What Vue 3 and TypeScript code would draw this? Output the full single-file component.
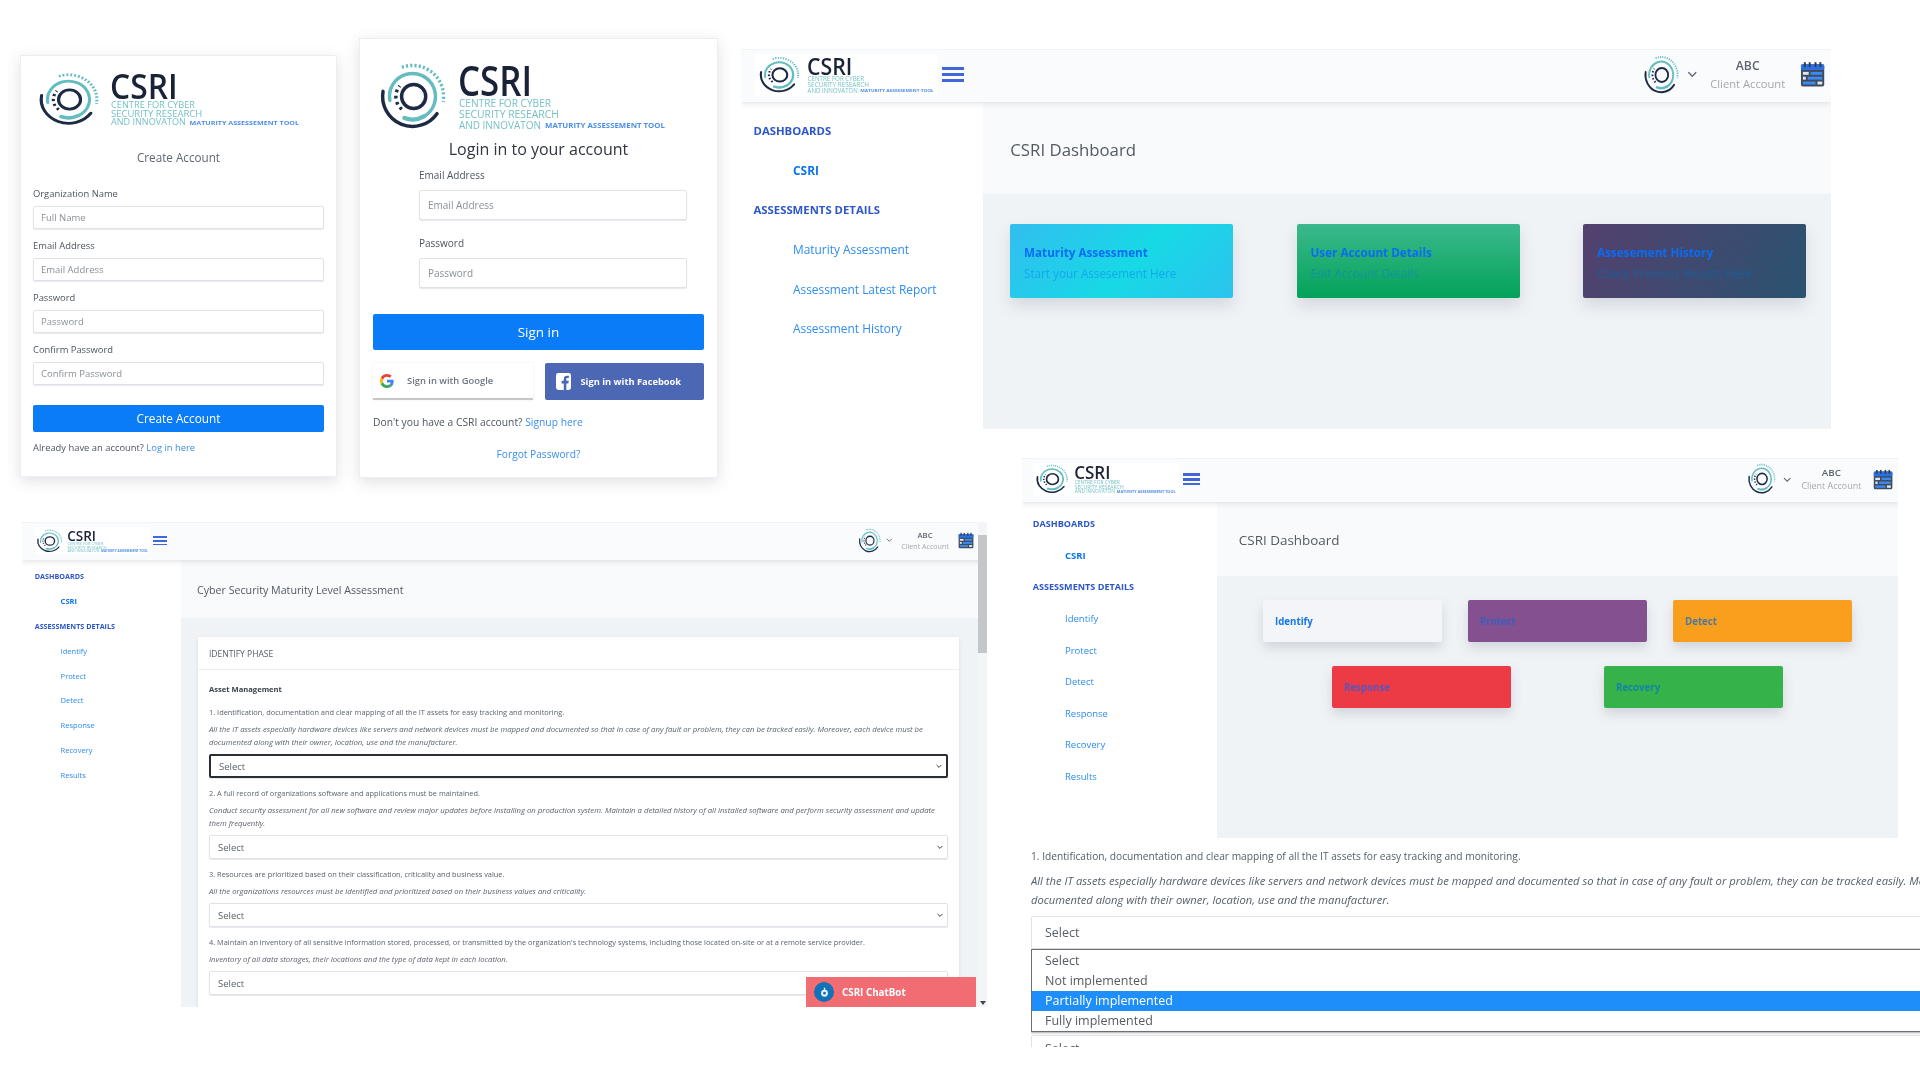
<script setup lang="ts">
import { defineComponent, h } from 'vue'

const arc = (d: string, stroke: string, width: number, dash?: string) =>
  h('path', { d, fill: 'none', stroke, 'stroke-width': width, 'stroke-dasharray': dash, 'stroke-linecap': dash ? 'butt' : 'round' })

const ringParts = () => [
  arc('M4.4 25.5A26 26 0 0 0 51.3 44.9', '#1d2a44', 3),
  arc('M10.3 33.5A20 20 0 1 1 40 47.3', '#63bcc0', 3),
  arc('M40 47.3A20 20 0 0 1 23 48.7', '#63bcc0', 3.8),
  arc('M20.8 4.6A27 27 0 0 1 56.6 34.7', '#63bcc0', 3, '1.8 1.9'),
  arc('M20.7 41.1A14.5 14.5 0 0 1 18.9 20.7', '#1d2a44', 3, '2.4 3'),
  h('circle', { cx: 31, cy: 30, r: 10.5, fill: 'none', stroke: '#1d2a44', 'stroke-width': 3 }),
]

const Mark = defineComponent({
  setup() {
    return () => h('svg', { viewBox: '0 0 60 60', preserveAspectRatio: 'none', width: '100%', height: '100%' }, ringParts())
  },
})

const tealLine = (y: number, text: string, len: number) =>
  h('text', { x: 81, y, 'font-size': 11.5, fill: '#76c1c6', textLength: len, lengthAdjust: 'spacingAndGlyphs', 'font-family': 'Open Sans, sans-serif' }, text)

const Logo = defineComponent({
  setup() {
    return () =>
      h('svg', { viewBox: '0 0 288 69', preserveAspectRatio: 'none', width: '100%', height: '100%', style: 'overflow:visible' }, [
        h('g', { transform: 'scale(1.15)' }, ringParts()),
        h('text', { x: 80, y: 34, 'font-size': 42, fill: '#1a2238', textLength: 74, lengthAdjust: 'spacingAndGlyphs', 'font-family': 'Open Sans, sans-serif', 'font-weight': 600 }, 'CSRI'),
        tealLine(45, 'CENTRE FOR CYBER', 92),
        tealLine(56, 'SECURITY RESEARCH', 100),
        tealLine(67, 'AND INNOVATON', 82),
        h('text', { x: 167, y: 66, 'font-size': 7.5, fill: '#4c8fe8', 'font-weight': 700, textLength: 120, lengthAdjust: 'spacingAndGlyphs', 'font-family': 'Open Sans, sans-serif' }, 'MATURITY ASSESSEMENT TOOL'),
      ])
  },
})

const createFields = [
  { label: 'Organization Name', ph: 'Full Name' },
  { label: 'Email Address', ph: 'Email Address' },
  { label: 'Password', ph: 'Password' },
  { label: 'Confirm Password', ph: 'Confirm Password' },
]
const loginFields = [
  { label: 'Email Address', ph: 'Email Address' },
  { label: 'Password', ph: 'Password' },
]
const phaseLinks = ['Identify', 'Protect', 'Detect', 'Response', 'Recovery', 'Results']
const shells = [
  { key: 'dash', title: 'CSRI Dashboard', links: ['Maturity Assessment', 'Assessment Latest Report', 'Assessment History'] },
  { key: 'assess', title: 'Cyber Security Maturity Level Assessment', links: phaseLinks },
  { key: 'phases', title: 'CSRI Dashboard', links: phaseLinks },
]
const dashCards = [
  { cls: 'c-teal', title: 'Maturity Assessment', sub: 'Start your Assesement Here' },
  { cls: 'c-green', title: 'User Account Details', sub: 'Edit Account Details' },
  { cls: 'c-purple', title: 'Assesement History', sub: 'Check Previous Results Here' },
]
const phaseRows = [
  [
    { cls: 'p-white', name: 'Identify' },
    { cls: 'p-purple', name: 'Protect' },
    { cls: 'p-orange', name: 'Detect' },
  ],
  [
    { cls: 'p-red', name: 'Response' },
    { cls: 'p-green', name: 'Recovery' },
  ],
]
const questions = [
  {
    q: '1. Identification, documentation and clear mapping of all the IT assets for easy tracking and monitoring.',
    d: ['All the IT assets especially hardware devices like servers and network devices must be mapped and documented so that in case of any fault or problem, they can be tracked easily. Moreover, each device must be', 'documented along with their owner, location, use and the manufacturer.'],
    focus: true,
  },
  {
    q: '2. A full record of organizations software and applications must be maintained.',
    d: ['Conduct security assessment for all new software and review major updates before installing on production system. Maintain a detailed history of all installed software and perform security assessment and update', 'them frequently.'],
    focus: false,
  },
  {
    q: '3. Resources are prioritized based on their classification, criticality and business value.',
    d: ['All the organizations resources must be identified and prioritized based on their business values and criticality.'],
    focus: false,
  },
  {
    q: "4. Maintain an inventory of all sensitive information stored, processed, or transmitted by the organization's technology systems, including those located on-site or at a remote service provider.",
    d: ['Inventory of all data storages, their locations and the type of data kept in each location.'],
    focus: false,
  },
]
const options = ['Select', 'Not implemented', 'Partially implemented', 'Fully implemented']
</script>

<template>
  <div class="canvas">
    <!-- Create account -->
    <section class="win create">
      <div class="logo-c"><Logo /></div>
      <h2 class="create-title">Create Account</h2>
      <div v-for="f in createFields" :key="f.label" class="c-field">
        <label>{{ f.label }}</label>
        <div class="input">{{ f.ph }}</div>
      </div>
      <div class="btn c-btn">Create Account</div>
      <p class="c-foot">Already have an account? <a>Log in here</a></p>
    </section>

    <!-- Login -->
    <section class="win login">
      <div class="logo-l"><Logo /></div>
      <h1 class="login-title">Login in to your account</h1>
      <div class="l-fields">
        <div v-for="f in loginFields" :key="f.label" class="l-field">
          <label>{{ f.label }}</label>
          <div class="input">{{ f.ph }}</div>
        </div>
      </div>
      <div class="btn l-btn">Sign in</div>
      <div class="social">
        <div class="s-google">
          <svg viewBox="0 0 48 48" width="14" height="14">
            <path fill="#EA4335" d="M24 9.5c3.5 0 6.6 1.2 9.1 3.6l6.8-6.8C35.8 2.5 30.3 0 24 0 14.6 0 6.5 5.4 2.6 13.2l7.9 6.2C12.4 13.7 17.7 9.5 24 9.5z" />
            <path fill="#4285F4" d="M46.9 24.5c0-1.6-.1-3.1-.4-4.5H24v9h12.9c-.6 3-2.2 5.5-4.7 7.2l7.7 6c4.5-4.2 7-10.3 7-17.7z" />
            <path fill="#FBBC05" d="M10.5 28.6a14.5 14.5 0 0 1 0-9.2l-7.9-6.2a24 24 0 0 0 0 21.6z" />
            <path fill="#34A853" d="M24 48c6.5 0 11.9-2.1 15.9-5.8l-7.7-6c-2.2 1.5-4.9 2.3-8.2 2.3-6.3 0-11.6-4.2-13.5-9.9l-7.9 6.2C6.5 42.6 14.6 48 24 48z" />
          </svg>
          <span>Sign in with Google</span>
        </div>
        <div class="s-fb">
          <svg viewBox="0 0 16 18" width="15" height="17">
            <rect width="16" height="18" rx="2.5" fill="#fff" />
            <path fill="#4c68b5" d="M11 18v-7h2.2l.4-2.7H11V6.6c0-.8.3-1.3 1.4-1.3h1.3V2.9c-.3 0-1.1-.1-2-.1-2 0-3.4 1.2-3.4 3.5v2H6v2.7h2.3v7z" />
          </svg>
          <span>Sign in with Facebook</span>
        </div>
      </div>
      <p class="l-foot">Don't you have a CSRI account? <a>Signup here</a></p>
      <p class="l-forgot"><a>Forgot Password?</a></p>
    </section>

    <!-- Dashboards with shared shell -->
    <section v-for="s in shells" :key="s.key" class="win shell" :class="'shell-' + s.key">
      <header class="top">
        <div class="top-logo"><Logo /></div>
        <div class="burger"><i></i><i></i><i></i></div>
        <div class="top-space"></div>
        <div class="top-mark"><Mark /></div>
        <svg class="top-chev" viewBox="0 0 12 8"><path d="M1.5 1.5 6 6l4.5-4.5" fill="none" stroke="#667" stroke-width="1.6" /></svg>
        <div class="user">
          <strong>ABC</strong>
          <span>Client Account</span>
        </div>
        <svg class="cal" viewBox="0 0 26 27">
          <rect x="1" y="3" width="24" height="23" rx="2" fill="#3f4c5e" />
          <rect x="1" y="3" width="24" height="6" rx="1.5" fill="#2e6fe0" />
          <g fill="#2e3b55"><rect x="4" y="1" width="2" height="5" /><rect x="9" y="1" width="2" height="5" /><rect x="15" y="1" width="2" height="5" /><rect x="20" y="1" width="2" height="5" /></g>
          <g fill="#dfe7f3"><rect x="3" y="11" width="6" height="3" /><rect x="3" y="16" width="3" height="3" /><rect x="18" y="21" width="5" height="3" /></g>
          <g fill="#3d8bf0"><rect x="11" y="11" width="12" height="3" /><rect x="8" y="16" width="15" height="3" /><rect x="3" y="21" width="13" height="3" /></g>
        </svg>
      </header>
      <div class="body">
        <aside class="side">
          <div class="s-head"><span>DASHBOARDS</span></div>
          <div class="s-link s-active"><span>CSRI</span></div>
          <div class="s-head"><span>ASSESSMENTS DETAILS</span></div>
          <div v-for="l in s.links" :key="l" class="s-link"><span>{{ l }}</span></div>
        </aside>
        <main class="main">
          <div class="band"><h3>{{ s.title }}</h3></div>

          <div v-if="s.key === 'dash'" class="dash-cards">
            <div v-for="c in dashCards" :key="c.title" class="d-card" :class="c.cls">
              <b>{{ c.title }}</b>
              <span>{{ c.sub }}</span>
            </div>
          </div>

          <div v-else-if="s.key === 'phases'" class="phase-wrap">
            <div v-for="(row, i) in phaseRows" :key="i" class="phase-row" :class="'row-' + i">
              <div v-for="p in row" :key="p.name" class="p-card" :class="p.cls"><b>{{ p.name }}</b></div>
            </div>
          </div>

          <div v-else class="a-wrap">
            <div class="a-card">
              <div class="a-head">IDENTIFY PHASE</div>
              <div class="a-body">
                <h4>Asset Management</h4>
                <div v-for="q in questions" :key="q.q" class="a-q">
                  <p class="q">{{ q.q }}</p>
                  <p v-for="line in q.d" :key="line" class="d">{{ line }}</p>
                  <div class="a-sel" :class="{ focus: q.focus }">
                    <span>Select</span>
                    <svg viewBox="0 0 10 7"><path d="M1 1l4 4 4-4" fill="none" stroke="#333" stroke-width="1.6" /></svg>
                  </div>
                </div>
              </div>
            </div>
          </div>
        </main>
      </div>
      <template v-if="s.key === 'assess'">
        <div class="scroll"><div class="thumb"></div><i class="arrow"></i></div>
        <div class="bot">
          <span class="bot-ic"><svg viewBox="0 0 16 16" width="11" height="13"><circle cx="8" cy="9" r="5" fill="#e8f1fa" /><rect x="7" y="1" width="2" height="4" fill="#e8f1fa" /><circle cx="8" cy="9" r="2" fill="#1172b8" /></svg></span>
          <span>CSRI ChatBot</span>
        </div>
      </template>
    </section>

    <!-- Open select crop -->
    <section class="crop">
      <p class="q6">1. Identification, documentation and clear mapping of all the IT assets for easy tracking and monitoring.</p>
      <p class="d6">All the IT assets especially hardware devices like servers and network devices must be mapped and documented so that in case of any fault or problem, they can be tracked easily. Moreover, each device must be<br />documented along with their owner, location, use and the manufacturer.</p>
      <div class="sel6">Select</div>
      <ul class="list6">
        <li v-for="o in options" :key="o" :class="{ on: o === 'Partially implemented' }">{{ o }}</li>
      </ul>
      <div class="sel6 next6">Select</div>
    </section>
  </div>
</template>

<style>
html, body { margin: 0; background: #fff; }
</style>

<style scoped>
* { box-sizing: border-box; }
.canvas {
  position: relative;
  width: 1920px;
  height: 1080px;
  overflow: hidden;
  background: #fff;
  font-family: "Open Sans", "Liberation Sans", sans-serif;
  color: #5a6470;
  filter: blur(0.55px);
}
.win { position: absolute; background: #fff; }
p, h1, h2, h3, h4, ul { margin: 0; padding: 0; }
a { color: #3b8ee8; }

.create {
  left: 20px; top: 55px; width: 317px; height: 422px;
  padding: 16px 12px 0;
  border: 1px solid #eceef1;
  box-shadow: 0 4px 14px rgba(60, 70, 90, .16);
}
.logo-c { width: 263px; height: 55px; margin-left: 4px; }
.create-title { margin-top: 21px; height: 38px; text-align: center; font-size: 11.7px; line-height: 18px; font-weight: 400; color: #5f6772; }
.c-field { margin-bottom: 9px; height: 43px; }
.c-field label { display: block; height: 20px; font-size: 9.4px; line-height: 16px; color: #4d5560; }
.input {
  height: 23px; padding-left: 7px; border: 1px solid #dfe3e8; border-radius: 2px;
  box-shadow: 0 1px 1px #e6e8ec; background: #fff;
  font-size: 9.5px; line-height: 21px; color: #8a9099;
}
.btn { background: #0a7cf8; color: #fff; text-align: center; border-radius: 2px; }
.c-btn { margin-top: 20px; height: 27px; font-size: 11.8px; line-height: 27px; }
.c-foot { margin-top: 9px; font-size: 9.4px; line-height: 14px; color: #4d5560; }

.login {
  left: 359px; top: 38px; width: 359px; height: 440px;
  padding: 23px 13px 0;
  border: 1px solid #eceef1;
  box-shadow: 0 4px 14px rgba(60, 70, 90, .16);
}
.logo-l { width: 288px; height: 69px; margin-left: 5px; }
.login-title { margin-top: 6px; text-align: center; font-size: 16px; line-height: 24px; font-weight: 500; color: #2f3640; }
.l-fields { margin-left: 46px; width: 268px; }
.l-field { height: 68px; padding-top: 2px; }
.l-field label { display: block; height: 23px; margin-top: 4px; font-size: 10px; line-height: 17px; color: #4d5560; }
.l-field .input { height: 30px; padding-left: 8px; font-size: 10px; line-height: 28px; }
.l-btn { margin-top: 17px; height: 36px; font-size: 13.5px; line-height: 36px; }
.social { display: flex; gap: 12px; margin-top: 13px; height: 37px; }
.s-google {
  width: 161px; display: flex; align-items: center; gap: 13px; padding-left: 7px;
  border-bottom: 2px solid #c8c8c8; box-shadow: 0 0 3px #eee;
  font-size: 9.4px; color: #6f7580; font-weight: 600;
}
.s-fb {
  width: 159px; display: flex; align-items: center; gap: 9px; padding-left: 11px;
  background: #4c68b5; color: #fff; border-radius: 2px;
  font-size: 9.3px; font-weight: 700;
}
.l-foot { margin-top: 14px; font-size: 10.3px; line-height: 16px; color: #4d5560; }
.l-forgot { margin-top: 16px; text-align: center; font-size: 10.2px; line-height: 16px; }

/* shell */
.shell { display: flex; flex-direction: column; overflow: hidden; }
.shell-dash { left: 741px; top: 49px; width: 1090px; height: 380px; font-size: 14px; --top-h: 53px; --side-w: 242px; --band-h: 92px; --logo-x: 14px; --head-x: 12.5px; --link-x: 52px; --top-r: 0px; --side-top: 9px; --row-h: 2.82em; }
.shell-phases { left: 1022px; top: 458px; width: 876px; height: 380px; font-size: 11.2px; --top-h: 44px; --side-w: 195px; --band-h: 74px; --logo-x: 11px; --head-x: 10.8px; --link-x: 43px; --top-r: 0px; --side-top: 6px; --row-h: 2.82em; }
.shell-assess { left: 22px; top: 522px; width: 965px; height: 485px; font-size: 8.9px; --top-h: 38px; --side-w: 159px; --band-h: 58px; --logo-x: 12.5px; --head-x: 12.7px; --link-x: 38.6px; --top-r: 9px; --side-top: 3.5px; --row-h: 2.8em; }
.top {
  flex: none; height: var(--top-h); display: flex; align-items: center;
  background: #fafbfc; padding: 0 var(--top-r) .2em var(--logo-x);
  border-top: 1px solid #f2f3f5;
  box-shadow: 0 1px 6px rgba(70, 80, 90, .18); position: relative; z-index: 1;
}
.top-logo { width: 13em; height: 3em; padding: .15em .2em; background: #fff; }
.burger { display: flex; flex-direction: column; gap: .24em; margin-left: .35em; width: 1.55em; }
.burger i { display: block; height: .2em; background: #3f67d8; }
.top-space { flex: 1; }
.top-mark { width: 2.6em; height: 2.85em; }
.top-chev { width: .75em; height: .5em; margin-left: .55em; }
.user { width: 6.5em; margin-left: .35em; text-align: center; display: flex; flex-direction: column; gap: .2em; }
.user strong { font-size: .87em; line-height: 1.2; font-weight: 600; color: #5e6570; }
.user span { font-size: .8em; line-height: 1.2; color: #a4a9b0; white-space: nowrap; }
.cal { width: 1.8em; height: 1.9em; margin: 0 .45em 0 .45em; }
.body { flex: 1; display: flex; min-height: 0; }
.side { flex: none; width: var(--side-w); padding-top: var(--side-top); background: #fff; }
.s-head, .s-link { height: var(--row-h); display: flex; align-items: center; }
.s-head { padding-left: var(--head-x); }
.s-head span { font-size: .81em; font-weight: 700; color: #2c57c8; white-space: nowrap; }
.s-link { padding-left: var(--link-x); }
.s-link span { font-size: .85em; color: #2d8cf0; white-space: nowrap; }
.s-active span { font-weight: 700; color: #0b74f0; }
.main { flex: 1; min-width: 0; background: #f0f3f6; }
.band { height: var(--band-h); padding: .2em 0 0 1.95em; display: flex; align-items: center; background: #f9fafb; }
.band h3 { margin: 0; font-size: 1.2em; font-weight: 400; color: #525a64; }
.shell-assess .band { padding-left: 1.8em; }

.dash-cards { display: flex; gap: 63.5px; padding: 30px 0 0 27px; }
.d-card {
  width: 223px; height: 74px; padding: 20px 14px 0; border-radius: 2px;
  display: flex; flex-direction: column; gap: 5px;
  box-shadow: 0 8px 16px rgba(70, 80, 100, .16);
}
.d-card b { font-size: 11.7px; line-height: 16px; color: #0b6cf2; font-weight: 700; }
.d-card span { font-size: 11.7px; line-height: 16px; }
.c-teal { background: linear-gradient(135deg, #33bdf0, #17d9e5 55%, #2cc3ee); }
.c-teal span { color: #12a8ec; }
.c-green { background: linear-gradient(180deg, #3cb98d, #03a259); }
.c-green span { color: #0f95a0; }
.c-purple { background: linear-gradient(120deg, #54406f, #2a5370); }
.c-purple span { color: #1d5d95; }

.phase-wrap { display: flex; flex-direction: column; gap: 24px; padding-top: 24px; }
.phase-row { display: flex; justify-content: center; }
.row-0 { gap: 26px; }
.row-1 { gap: 93px; }
.p-card {
  width: 179px; height: 42px; padding-left: 12px; display: flex; align-items: center;
  border-radius: 2px; box-shadow: 0 6px 12px rgba(70, 80, 100, .18);
}
.p-card b { font-size: 9.7px; color: #1777e8; font-weight: 700; }
.p-white { background: #f3f5f8; }
.p-purple { background: #84508f; }
.p-purple b { color: #3a5fbc; }
.p-orange { background: #f99e1d; }
.p-orange b { color: #4a7a9c; }
.p-red { background: #ec3b45; }
.p-red b { color: #5a55bd; }
.p-green { background: #35b24a; }
.p-green b { color: #1585a5; }

.a-wrap { padding: 19px 0 0 17px; height: calc(100% - var(--band-h)); overflow: hidden; }
.a-card { width: 761px; background: #fff; box-shadow: 0 1px 4px rgba(80, 90, 100, .12); }
.a-head { height: 33px; padding-left: 11px; display: flex; align-items: center; font-size: 8.5px; color: #55606a; border-bottom: 1px solid #edeff2; font-weight: 500; }
.a-body { padding: 13px 11px 30px 11px; }
.a-body h4 { font-size: 7.6px; line-height: 12px; color: #3b4149; font-weight: 700; }
.a-q { margin-top: 11px; }
.a-q + .a-q { margin-top: 9px; }
.q { font-size: 7.4px; line-height: 12px; color: #5b636d; white-space: nowrap; margin-bottom: 5px; }
.d { font-size: 7.75px; line-height: 13px; font-style: italic; color: #5b636d; white-space: nowrap; }
.a-sel {
  margin-top: 5px; height: 24px; padding: 0 4px 0 8px; display: flex; align-items: center; justify-content: space-between;
  border: 1px solid #dfe3e8; border-radius: 2px; box-shadow: 0 1px 1px #e6e8ec;
  font-size: 9.5px; color: #5b636d;
}
.a-sel svg { width: 6px; height: 5px; }
.a-sel.focus { border: 2px solid #2a2d33; }
.scroll { position: absolute; right: 0; top: 0; bottom: 0; width: 9px; background: #f4f5f6; z-index: 2; }
.thumb { margin-top: 13px; height: 118px; background: #c4c6c9; }
.arrow { position: absolute; left: 2px; bottom: 2px; border: 3px solid transparent; border-top: 4px solid #444; border-bottom: 0; }
.bot {
  position: absolute; right: 11px; bottom: 0; width: 170px; height: 30px; z-index: 3;
  display: flex; align-items: center; gap: 8px; padding-left: 8px;
  background: #f16d73; color: #fff; font-size: 9.8px; font-weight: 700;
}
.bot-ic { width: 20px; height: 20px; border-radius: 50%; background: #1172b8; display: flex; align-items: center; justify-content: center; }

/* open select crop */
.crop { position: absolute; left: 1031px; top: 849px; width: 1100px; height: 198px; overflow: hidden; }
.q6 { font-size: 10.2px; line-height: 15px; color: #55606a; white-space: nowrap; }
.d6 { margin-top: 7px; font-size: 11.2px; line-height: 19px; font-style: italic; color: #55606a; white-space: nowrap; }
.sel6 {
  margin-top: 7px; height: 33px; padding-left: 13px; border: 1px solid #dfe3e8; border-radius: 2px;
  font-size: 12.5px; line-height: 31px; color: #565e68;
}
.list6 {
  list-style: none; height: 83px; padding-top: 1px; position: relative;
  border: 1px solid #6b6f75; background: #fff; box-shadow: 0 1px 2px rgba(0, 0, 0, .35);
}
.list6 li { height: 20px; padding-left: 13px; font-size: 12.5px; line-height: 20px; color: #555c66; }
.list6 li.on { background: #1e8efb; color: #fff; }
.next6 { margin-top: 3px; line-height: 26px; }
</style>
